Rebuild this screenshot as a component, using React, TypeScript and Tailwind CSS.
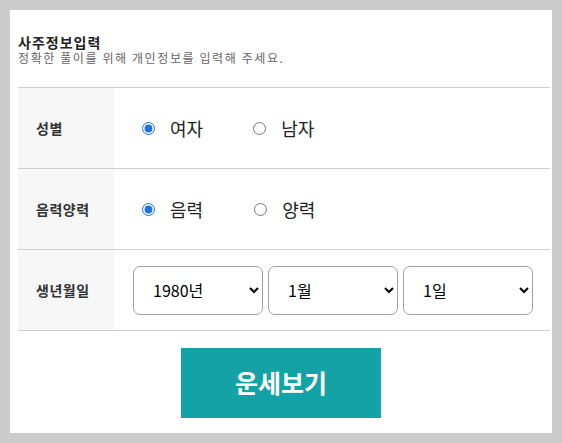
import React from "react";

const font = { fontFamily: '"Noto Sans CJK KR", "Noto Sans", sans-serif' };

function Radio({ label, checked, name }: { label: string; checked?: boolean; name: string }) {
  return (
    <label className="flex items-center">
      <input
        type="radio"
        name={name}
        defaultChecked={checked}
        className="m-0 h-[13px] w-[13px] accent-[#1a73e8]"
      />
      <span className="ml-[15px] text-[18px] leading-none text-[#222]">{label}</span>
    </label>
  );
}

function Row({ label, children }: { label: string; children: React.ReactNode }) {
  return (
    <div className="grid grid-cols-[96px_1fr] h-[81px] border-b border-[#cfcfcf]">
      <div className="bg-[#f7f7f7] flex items-center pl-[18px] text-[14px] tracking-[0.5px] font-bold text-[#333]">
        {label}
      </div>
      <div className="flex items-center">{children}</div>
    </div>
  );
}

export default function App() {
  return (
    <div className="bg-[#cccccc] h-[443px] p-[10px]" style={font}>
      <div className="bg-white h-full pt-[24px] pl-[8px] pr-[2px]">
        <div className="text-[14px] font-bold leading-[17px] tracking-[1px] text-[#222]">사주정보입력</div>
        <div className="text-[12px] leading-[14px] text-[#666] tracking-[1.6px]">
          정확한 풀이를 위해 개인정보를 입력해 주세요.
        </div>
        <div className="mt-[22px] border-t border-[#cfcfcf]">
          <Row label="성별">
            <div className="flex items-center pl-[28px] gap-[50px]">
              <Radio name="g" label="여자" checked />
              <Radio name="g" label="남자" />
            </div>
          </Row>
          <Row label="음력양력">
            <div className="flex items-center pl-[28px] gap-[51px]">
              <Radio name="c" label="음력" checked />
              <Radio name="c" label="양력" />
            </div>
          </Row>
          <Row label="생년월일">
            <div className="flex items-center pl-[19px] gap-[5px]">
              <select className="w-[130px] h-[49px] border border-[#a0a0a0] rounded-[7px] pl-[15px] text-[16px] text-black bg-white">
                <option>1980년</option>
              </select>
              <select className="w-[130px] h-[49px] border border-[#a0a0a0] rounded-[7px] pl-[15px] text-[16px] text-black bg-white">
                <option>1월</option>
              </select>
              <select className="w-[130px] h-[49px] border border-[#a0a0a0] rounded-[7px] pl-[15px] text-[16px] text-black bg-white">
                <option>1일</option>
              </select>
            </div>
          </Row>
        </div>
        <div className="flex justify-center mt-[17px] pr-[6px]">
          <button className="w-[200px] h-[70px] bg-[#13a3a6] text-white text-[25px] font-bold">
            운세보기
          </button>
        </div>
      </div>
    </div>
  );
}
